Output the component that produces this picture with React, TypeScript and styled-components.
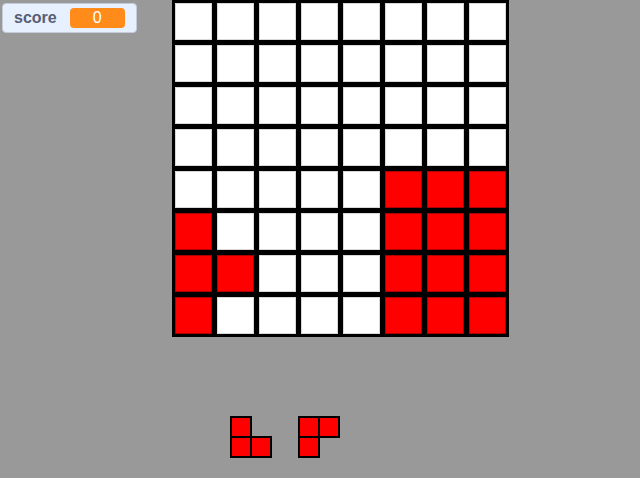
import React from 'react';
import styled, { createGlobalStyle } from 'styled-components';

const GlobalStyle = createGlobalStyle`
  html, body {
    margin: 0;
    padding: 0;
    background: #999999;
  }
  * {
    box-sizing: border-box;
  }
`;

const Stage = styled.div`
  position: relative;
  width: 640px;
  height: 478px;
  overflow: hidden;
  background: #999999;
  font-family: "Liberation Sans", Arial, sans-serif;
`;

const Monitor = styled.div`
  position: absolute;
  left: 2px;
  top: 3px;
  width: 135px;
  height: 30px;
  display: flex;
  align-items: center;
  gap: 13px;
  padding: 0 0 0 10px;
  background: #e6f0ff;
  border: 1px solid #c4ccd9;
  border-radius: 4px;
`;

const MonitorLabel = styled.span`
  font-size: 16px;
  font-weight: bold;
  color: #575e75;
  padding-left: 1px;
`;

const MonitorValue = styled.span`
  width: 55px;
  height: 20px;
  display: flex;
  align-items: center;
  justify-content: center;
  background: #ff8c1a;
  border-radius: 4px;
  color: #ffffff;
  font-size: 16px;
`;

const Sprite = styled.div<{ $x: number; $y: number }>`
  position: absolute;
  left: ${(p) => p.$x}px;
  top: ${(p) => p.$y}px;
`;

const Board = styled.div`
  display: grid;
  grid-template-columns: repeat(8, 37px);
  grid-auto-rows: 37px;
  gap: 5px;
  padding: 3px;
  background: #000000;
`;

const Cell = styled.div<{ $on: boolean }>`
  background: ${(p) => (p.$on ? '#ff0000' : '#ffffff')};
  box-shadow: inset 0 0 0 1px ${(p) => (p.$on ? '#b00000' : '#d8d8d8')};
`;

const Piece = styled.div`
  display: grid;
  grid-template-columns: repeat(2, 20px);
  grid-auto-rows: 20px;
  padding: 1px;
`;

const Block = styled.div<{ $on: boolean }>`
  background: ${(p) => (p.$on ? '#ff0000' : 'transparent')};
  border: ${(p) => (p.$on ? '1px solid #000' : 'none')};
  box-shadow: ${(p) => (p.$on ? '0 0 0 1px #000' : 'none')};
`;

const board = [
  '00000000',
  '00000000',
  '00000000',
  '00000000',
  '00000111',
  '10000111',
  '11000111',
  '10000111',
];

const pieces = [
  { x: 230, y: 416, shape: ['10', '11'] },
  { x: 298, y: 416, shape: ['11', '10'] },
];

export default function App() {
  return (
    <>
      <GlobalStyle />
      <Stage>
        <Sprite $x={172} $y={0}>
          <Board>
            {board.flatMap((row, r) =>
              row.split('').map((c, i) => <Cell key={`${r}-${i}`} $on={c === '1'} />)
            )}
          </Board>
        </Sprite>

        {pieces.map((p, n) => (
          <Sprite key={n} $x={p.x} $y={p.y}>
            <Piece>
              {p.shape.flatMap((row, r) =>
                row.split('').map((c, i) => <Block key={`${r}-${i}`} $on={c === '1'} />)
              )}
            </Piece>
          </Sprite>
        ))}

        <Monitor>
          <MonitorLabel>score</MonitorLabel>
          <MonitorValue>0</MonitorValue>
        </Monitor>
      </Stage>
    </>
  );
}
